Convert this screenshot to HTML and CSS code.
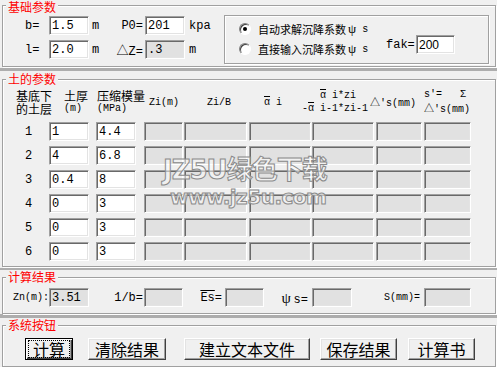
FILE: index.html
```html
<!DOCTYPE html>
<html lang="zh-CN">
<head>
  <meta charset="UTF-8">
  <title>沉降计算</title>
  <link rel="stylesheet" href="styles.css">
</head>
<body>
  <div class="win">
    <div class="grp grp-base">
      <span class="grp-title">基础参数</span>
      <div class="base-body">
        <div class="base-fields">
          <div class="frow">
            <span class="lbl-first mono">b=</span>
            <input class="tb" value="1.5" readonly>
            <span class="unit-m mono">m</span>
            <span class="lbl-mid mono">P0=</span>
            <input class="tb" value="201" readonly>
            <span class="unit-k mono">kpa</span>
          </div>
          <div class="frow">
            <span class="lbl-first mono">l=</span>
            <input class="tb" value="2.0" readonly>
            <span class="unit-m mono">m</span>
            <span class="lbl-mid mono"><span class="tri">△</span>Z=</span>
            <input class="tb tb-off" value=".3" readonly>
            <span class="unit-k mono">m</span>
          </div>
        </div>
        <div class="psi-box">
          <div class="radios">
            <div class="radio-row"><span class="radio radio-on"></span>自动求解沉降系数<span class="psi">ψ</span><span class="psi-s">s</span></div>
            <div class="radio-row"><span class="radio"></span>直接输入沉降系数<span class="psi">ψ</span><span class="psi-s">s</span></div>
          </div>
          <span class="fak mono">fak=</span>
          <input class="tb tb-fak" value="200" readonly>
        </div>
      </div>
    </div>
    <div class="sep sep-1"></div>

    <div class="grp grp-soil">
      <span class="grp-title">土的参数</span>
      <div class="soil-head">
        <div class="hc hc-1"><span>基底下</span><span>的土层</span></div>
        <div class="hc hc-2"><span>土厚</span><span class="sm">(m)</span></div>
        <div class="hc hc-3"><span>压缩模量</span><span class="sm">(MPa)</span></div>
        <div class="hc hc-4"><span class="sm">Zi(m)</span></div>
        <div class="hc hc-5"><span class="sm">Zi/B</span></div>
        <div class="hc hc-6"><span class="sm"><span class="bar">α</span> i</span></div>
        <div class="hc hc-7">
          <span class="sm line-top"><span class="bar">α</span> i*zi</span>
          <span class="sm">-<span class="bar">α</span> i-1*zi-1</span>
        </div>
        <div class="hc hc-8"><span class="sm"><span class="tri">△</span>'s(mm)</span></div>
        <div class="hc hc-9">
          <span class="sm">s'=&nbsp;&nbsp;&nbsp;Σ</span>
          <span class="sm"><span class="tri">△</span>'s(mm)</span>
        </div>
      </div>
      <div class="srow">
        <span class="num mono">1</span>
        <input class="tb c-h" value="1" readonly><input class="tb c-e" value="4.4" readonly>
        <input class="tb tb-off c-zi" readonly><input class="tb tb-off c-zb" readonly><input class="tb tb-off c-a" readonly>
        <input class="tb tb-off c-az" readonly><input class="tb tb-off c-ds" readonly><input class="tb tb-off c-s" readonly>
      </div>
      <div class="srow">
        <span class="num mono">2</span>
        <input class="tb c-h" value="4" readonly><input class="tb c-e" value="6.8" readonly>
        <input class="tb tb-off c-zi" readonly><input class="tb tb-off c-zb" readonly><input class="tb tb-off c-a" readonly>
        <input class="tb tb-off c-az" readonly><input class="tb tb-off c-ds" readonly><input class="tb tb-off c-s" readonly>
      </div>
      <div class="srow">
        <span class="num mono">3</span>
        <input class="tb c-h" value="0.4" readonly><input class="tb c-e" value="8" readonly>
        <input class="tb tb-off c-zi" readonly><input class="tb tb-off c-zb" readonly><input class="tb tb-off c-a" readonly>
        <input class="tb tb-off c-az" readonly><input class="tb tb-off c-ds" readonly><input class="tb tb-off c-s" readonly>
      </div>
      <div class="srow">
        <span class="num mono">4</span>
        <input class="tb c-h" value="0" readonly><input class="tb c-e" value="3" readonly>
        <input class="tb tb-off c-zi" readonly><input class="tb tb-off c-zb" readonly><input class="tb tb-off c-a" readonly>
        <input class="tb tb-off c-az" readonly><input class="tb tb-off c-ds" readonly><input class="tb tb-off c-s" readonly>
      </div>
      <div class="srow">
        <span class="num mono">5</span>
        <input class="tb c-h" value="0" readonly><input class="tb c-e" value="3" readonly>
        <input class="tb tb-off c-zi" readonly><input class="tb tb-off c-zb" readonly><input class="tb tb-off c-a" readonly>
        <input class="tb tb-off c-az" readonly><input class="tb tb-off c-ds" readonly><input class="tb tb-off c-s" readonly>
      </div>
      <div class="srow">
        <span class="num mono">6</span>
        <input class="tb c-h" value="0" readonly><input class="tb c-e" value="3" readonly>
        <input class="tb tb-off c-zi" readonly><input class="tb tb-off c-zb" readonly><input class="tb tb-off c-a" readonly>
        <input class="tb tb-off c-az" readonly><input class="tb tb-off c-ds" readonly><input class="tb tb-off c-s" readonly>
      </div>
    </div>
    <div class="sep sep-2"></div>

    <div class="grp grp-result">
      <span class="grp-title">计算结果</span>
      <div class="rrow">
        <span class="rl rl-zn mono">Zn(m):</span>
        <input class="tb tb-off" value="3.51" readonly>
        <span class="rl rl-b mono">1/b=</span>
        <input class="tb tb-off r-39" readonly>
        <span class="rl rl-es mono"><span class="over">Es</span>=</span>
        <input class="tb tb-off r-39" readonly>
        <span class="rl rl-psi"><span class="psi psi-big">ψ</span> <span class="mono">s=</span></span>
        <input class="tb tb-off" readonly>
        <span class="rl rl-s mono">S(mm)=</span>
        <input class="tb tb-off r-47" readonly>
      </div>
    </div>
    <div class="sep sep-3"></div>

    <div class="grp grp-btns">
      <span class="grp-title">系统按钮</span>
      <div class="brow">
        <button class="btn btn-default"><span class="focus">计算</span></button>
        <button class="btn btn-clear">清除结果</button>
        <button class="btn btn-text">建立文本文件</button>
        <button class="btn btn-save">保存结果</button>
        <button class="btn btn-book">计算书</button>
      </div>
    </div>

    <div class="watermark">
      <div class="wm-top">JZ5U绿色下载</div>
      <div class="wm-bottom">www.jz5u.com</div>
    </div>
  </div>
</body>
</html>
```

FILE: styles.css
```css
* {
  box-sizing: border-box;
}

body {
  margin: 0;
  background-color: #f0f0f0;
  font-family: "Noto Sans CJK SC", sans-serif;
  font-size: 12px;
  color: #000;
}

.win {
  position: relative;
  width: 497px;
  height: 367px;
  overflow: hidden;
}

.mono {
  font-family: "Liberation Mono", "Noto Sans CJK SC", monospace;
}

/* group boxes */
.grp {
  position: relative;
  margin: 7px 1px 0 2px;
  border: 1px solid #a0a0a0;
  box-shadow: inset 1px 1px 0 #fff, 1px 1px 0 #fff;
}

.grp-title {
  position: absolute;
  left: 3px;
  top: -8px;
  padding: 0 2px;
  line-height: 14px;
  font-size: 12px;
  color: #ff0000;
  background-color: #f0f0f0;
}

.grp-base .grp-title {
  top: -6px;
}

.sep {
  background-color: #adadad;
}

.sep-1 {
  margin-top: 1px;
  height: 3px;
}

.sep-2 {
  margin-top: 1px;
  height: 2px;
}

.sep-3 {
  height: 4px;
}

/* text boxes */
.tb {
  display: block;
  flex: none;
  width: 40px;
  height: 19px;
  margin: 0;
  padding: 0 0 0 2px;
  border: 1px solid;
  border-color: #a0a0a0 #fff #fff #a0a0a0;
  box-shadow: inset 1px 1px 0 #696969, inset -1px -1px 0 #e3e3e3;
  background-color: #fff;
  font-family: "Liberation Mono", monospace;
  font-size: 12px;
  color: #000;
  outline: none;
}

.tb-off {
  background-color: #e1e1e1;
}

.tri {
  font-family: "Noto Sans CJK SC", sans-serif;
}

/* base parameters */
.grp-base {
  margin-top: 5px;
  padding: 9px 0 2px 0;
}

.base-body {
  display: flex;
}

.base-fields {
  display: flex;
  flex-direction: column;
  gap: 5px;
  padding-top: 1px;
}

.frow {
  display: flex;
  align-items: center;
  height: 19px;
}

.lbl-first {
  width: 46px;
  padding-left: 22px;
}

.unit-m {
  width: 23px;
  padding-left: 3px;
}

.lbl-mid {
  width: 33px;
  padding-right: 2px;
  text-align: right;
  white-space: nowrap;
}

.unit-k {
  width: 39px;
  padding-left: 4px;
}

.psi-box {
  display: flex;
  align-items: flex-start;
  width: 265px;
  height: 49px;
  padding: 3px 0 0 14px;
  border: 1px solid #a0a0a0;
  box-shadow: inset 1px 1px 0 #fff, 1px 1px 0 #fff;
}

.radios {
  display: flex;
  flex-direction: column;
  width: 147px;
}

.radio-row {
  display: flex;
  align-items: center;
  height: 20px;
  font-size: 11px;
  white-space: nowrap;
}

.radio {
  position: relative;
  width: 12px;
  height: 12px;
  margin-right: 7px;
  border-radius: 50%;
  border: 1px solid;
  border-color: #808080 #fff #fff #808080;
  box-shadow: inset 1px 1px 0 #404040;
  background-color: #fff;
}

.radio-on:after {
  content: "";
  position: absolute;
  left: 3px;
  top: 3px;
  width: 4px;
  height: 4px;
  border-radius: 50%;
  background-color: #000;
}

.psi {
  margin-left: 2px;
  font-family: "Liberation Serif", serif;
  font-size: 13px;
}

.psi-s {
  margin-left: 6px;
  font-family: "Liberation Mono", monospace;
  font-size: 10px;
}

.fak {
  margin-top: 19px;
  width: 30px;
  line-height: 14px;
}

.tb-fak {
  margin-top: 16px;
  width: 39px;
  font-family: "Liberation Sans", sans-serif;
}

/* soil table */
.grp-soil {
  margin-top: 8px;
  padding: 7px 0 5px 0;
}

.soil-head {
  display: flex;
  height: 30px;
}

.hc {
  display: flex;
  flex-direction: column;
  justify-content: center;
  line-height: 13px;
  white-space: nowrap;
}

.sm {
  font-family: "Liberation Mono", "Noto Sans CJK SC", monospace;
  font-size: 10px;
}

.bar {
  text-decoration: overline;
}

.over {
  text-decoration: overline;
}

.hc-1 { width: 58px; padding-left: 13px; }
.hc-2 { width: 32px; padding-left: 3px; }
.hc-3 { width: 53px; padding-left: 4px; }
.hc-4 { width: 38px; padding-left: 3px; }
.hc-5 { width: 65px; padding-left: 23px; }
.hc-6 { width: 51px; padding-left: 15px; }
.hc-7 { width: 70px; padding-left: 2px; }
.hc-8 { width: 50px; }
.hc-9 { width: 52px; padding-left: 4px; }

.line-top {
  padding-left: 18px;
}

.srow {
  display: flex;
  align-items: center;
  height: 19px;
  margin-top: 5px;
}

.num {
  width: 46px;
  padding-left: 22px;
}

.c-h { width: 40px; }
.c-e { width: 40px; margin-left: 7px; }
.c-zi { width: 39px; margin-left: 8px; }
.c-zb { width: 63px; margin-left: 1px; }
.c-a { width: 62px; margin-left: 2px; }
.c-az { width: 62px; margin-left: 1px; }
.c-ds { width: 46px; margin-left: 2px; }
.c-s { width: 47px; margin-left: 2px; }

/* results */
.grp-result {
  margin-top: 7px;
  padding: 10px 0 6px 0;
}

.rrow {
  display: flex;
  align-items: center;
  height: 19px;
}

.rl {
  text-align: right;
  white-space: nowrap;
}

.rl-zn { width: 46px; font-size: 10px; }
.rl-b { width: 55px; padding-right: 1px; }
.rl-es { width: 42px; padding-right: 3px; }
.rl-psi { width: 48px; padding-right: 4px; }
.rl-s { width: 72px; padding-right: 4px; font-size: 10px; }

.psi-big {
  font-size: 15px;
}

.r-39 { width: 39px; }
.r-47 { width: 47px; }

/* buttons */
.grp-btns {
  margin-top: 7px;
  padding: 12px 0 6px 0;
}

.brow {
  display: flex;
  padding-left: 22px;
}

.btn {
  height: 22px;
  padding: 0;
  font-family: "Noto Sans CJK SC", sans-serif;
  font-size: 16px;
  line-height: 18px;
  color: #000;
  background-color: #f0f0f0;
  border: 1px solid;
  border-color: #fff #404040 #404040 #fff;
  box-shadow: inset -1px -1px 0 #a0a0a0, inset 1px 1px 0 #e3e3e3;
}

.btn-default {
  width: 48px;
  border-color: #000;
  box-shadow: inset 1px 1px 0 #fff, inset -1px -1px 0 #404040, inset -2px -2px 0 #a0a0a0;
}

.focus {
  display: block;
  margin: 1px 2px 1px 2px;
  border: 1px dotted #000;
  line-height: 16px;
}

.btn-clear { width: 78px; margin-left: 15px; }
.btn-text { width: 126px; margin-left: 18px; }
.btn-save { width: 77px; margin-left: 10px; }
.btn-book { width: 67px; margin-left: 11px; }

/* site watermark over the table */
.watermark {
  position: absolute;
  left: 163px;
  top: 154px;
  font-family: "DejaVu Sans", "Noto Sans CJK SC", sans-serif;
  font-weight: bold;
  color: rgba(255, 255, 255, 0.55);
  -webkit-text-stroke: 1px #8a8a8a;
  pointer-events: none;
}

.wm-top {
  font-size: 26px;
  line-height: 32px;
  letter-spacing: -1px;
}

.wm-bottom {
  padding-left: 7px;
  font-size: 20px;
  line-height: 22px;
  letter-spacing: -0.5px;
}
```
